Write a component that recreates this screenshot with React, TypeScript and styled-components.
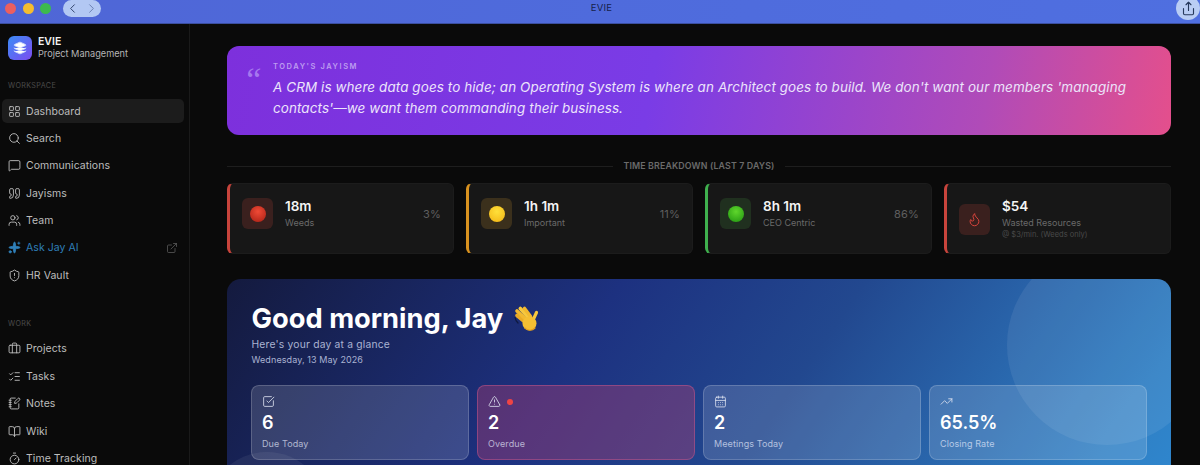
import React from 'react';
import styled, { createGlobalStyle } from 'styled-components';
import {
  LayoutGrid, Search, MessageSquare, Quote, Users, Sparkles, ExternalLink, ShieldAlert,
  Briefcase, ListChecks, NotebookPen, BookOpen, Timer, Flame, SquareCheckBig, TriangleAlert,
  CalendarDays, TrendingUp, ChevronLeft, ChevronRight, Share, Layers,
} from 'lucide-react';

const Global = createGlobalStyle`
  html, body { margin: 0; padding: 0; height: 465px; overflow: hidden; background: #0a0a0a; }
  body { font-family: Inter, "Noto Sans", "Liberation Sans", sans-serif; -webkit-font-smoothing: antialiased; }
  * { box-sizing: border-box; }
`;

const Window = styled.div`
  width: 1200px; height: 465px; display: flex; flex-direction: column; overflow: hidden; background: #0a0a0a;
`;
const TitleBar = styled.header`
  height: 24px; flex: none; display: grid; grid-template-columns: 1fr auto 1fr; align-items: start;
  background: linear-gradient(90deg, #4f66d6 0%, #4f6bdc 50%, #4f6fe0 100%);
  border-bottom: 1px solid #3b4f9f; overflow: hidden;
`;
const TitleLeft = styled.div`display: flex; align-items: flex-start; padding-left: 5px;`;
const Light = styled.span<{ $c: string; $mr?: number }>`
  width: 11px; height: 11px; border-radius: 50%; background: ${p => p.$c}; margin-right: ${p => p.$mr ?? 6.5}px; margin-top: 2.5px; flex: none;
`;
const NavPill = styled.div`
  width: 38px; height: 17px; border-radius: 9px; background: #b3c8f3; display: flex; align-items: center;
  justify-content: space-between; padding: 0 2px; margin-left: 12px; color: #33476f;
`;
const TitleText = styled.div`font-size: 9.5px; line-height: 16px; color: #16214a; letter-spacing: 0.2px; padding-left: 3px;`;
const TitleRight = styled.div`display: flex; justify-content: flex-end;`;
const ShareBtn = styled.div`
  width: 24px; height: 24px; border-radius: 50%; margin-top: -4px; background: #b9cdf4; color: #26395c;
  display: flex; align-items: center; justify-content: center;
`;
const Body = styled.div`flex: 1; display: flex; min-height: 0;`;
const Sidebar = styled.aside`
  width: 190px; flex: none; border-right: 1px solid #1a1a1a; padding: 12px 5px 0 2px; display: flex; flex-direction: column; background: #0a0a0a;
`;
const Brand = styled.div`display: flex; align-items: center; gap: 6px; padding-left: 6px; height: 24px;`;
const Logo = styled.div`
  width: 24px; height: 24px; border-radius: 6px; background: linear-gradient(135deg, #3b8cf6, #7c4cf0);
  display: flex; align-items: center; justify-content: center; color: #fff;
`;
const BrandText = styled.div`display: flex; flex-direction: column;`;
const BrandName = styled.div`font-size: 10.5px; line-height: 12px; font-weight: 600; color: #f2f2f2;`;
const BrandSub = styled.div`font-size: 9.2px; line-height: 12px; color: #b5b5b5;`;
const SectionLabel = styled.div<{ $top: number }>`
  font-size: 7.2px; line-height: 10px; letter-spacing: 0.35px; color: #4a4a4a; padding-left: 6px; margin-top: ${p => p.$top}px; margin-bottom: 8px;
`;
const NavList = styled.nav`display: flex; flex-direction: column; gap: 3.4px;`;
const NavItem = styled.div<{ $active?: boolean; $accent?: boolean }>`
  height: 24px; flex: none; display: flex; align-items: center; gap: 5.5px; padding: 0 5.5px; border-radius: 5px;
  font-size: 10.5px; letter-spacing: 0.05px; color: ${p => (p.$accent ? '#2f7fb8' : '#bdbdbd')};
  background: ${p => (p.$active ? '#1c1c1c' : 'transparent')};
  svg { flex: none; }
`;
const NavEnd = styled.span`margin-left: auto; margin-right: 1px; display: flex; color: #5f5f5f;`;
const Main = styled.main`flex: 1; min-width: 0; padding: 22px 29px 0 37px; display: flex; flex-direction: column; overflow: hidden;`;
const QuoteCard = styled.section`
  height: 89px; flex: none; border-radius: 12px; padding: 16px 20px 0 19px; display: flex; gap: 16px; position: relative; overflow: hidden;
  background: linear-gradient(100deg, #7d30dc 0%, #7a3ce6 45%, #b04bb8 80%, #e44f8c 100%);
`;
const QuoteMark = styled.div`
  font-family: "Liberation Serif", serif; font-size: 34px; line-height: 36px; color: #a678ee; font-style: italic; width: 11px; flex: none; transform: translateX(-3px);
`;
const QuoteBody = styled.div`display: flex; flex-direction: column;`;
const QuoteLabel = styled.div`font-size: 7.5px; line-height: 10px; font-weight: 600; letter-spacing: 1.55px; color: #bd9cf0; margin-bottom: 5px;`;
const QuoteText = styled.div`font-size: 13.45px; line-height: 21.3px; font-style: italic; color: #ece4fb; letter-spacing: 0.1px;`;
const Divider = styled.div`height: 10px; margin: 26px 0 12px; display: flex; align-items: center; gap: 10px;`;
const DivLine = styled.div`flex: 1; height: 1px; background: #1e1e1e;`;
const DivText = styled.div`font-size: 8.8px; line-height: 10px; font-weight: 600; color: #6b6b6b; letter-spacing: 0.15px;`;
const StatGrid = styled.div`display: grid; grid-template-columns: repeat(4, 1fr); gap: 12px; flex: none;`;
const TimeCard = styled.div<{ $c: string }>`
  height: 71px; border-radius: 6px; background: #171717; border: 1px solid #1c1c1c; border-left: 3px solid ${p => p.$c};
  padding: 14px 12px 0 12px;
`;
const TimeRow = styled.div`display: flex; align-items: center; gap: 12px;`;
const IconTile = styled.div<{ $bg: string }>`
  width: 31px; height: 31px; border-radius: 6px; background: ${p => p.$bg}; flex: none; display: flex; align-items: center; justify-content: center; color: #d8443c;
`;
const Ball = styled.span<{ $l: string; $d: string }>`
  width: 16px; height: 16px; border-radius: 50%; background: radial-gradient(circle at 50% 35%, ${p => p.$l}, ${p => p.$d});
`;
const TimeText = styled.div`display: flex; flex-direction: column; flex: 1; min-width: 0;`;
const TimeValue = styled.div`font-size: 13.5px; line-height: 17px; font-weight: 600; color: #f4f4f4;`;
const TimeLabel = styled.div`font-size: 9px; line-height: 13px; color: #6a6a6a; margin-top: 1px;`;
const TimeNote = styled.div`font-size: 7.5px; line-height: 11px; color: #4a4a4a;`;
const Pct = styled.div`font-size: 11px; color: #5f5f5f; letter-spacing: 0.2px;`;
const Hero = styled.section`
  margin-top: 25px; height: 230px; flex: none; border-radius: 14px; padding: 23px 24px 0; position: relative; overflow: hidden;
  background: linear-gradient(125deg, #141a3e 0%, #1d3180 36%, #22488f 58%, #2f7fc4 90%, #2f88d0 100%);
`;
const BlobTop = styled.div`
  position: absolute; width: 200px; height: 200px; border-radius: 50%; top: -34px; right: -36px; background: rgba(255,255,255,0.075);
`;
const BlobBottom = styled.div`
  position: absolute; width: 120px; height: 120px; border-radius: 50%; left: -20px; top: 173px; background: rgba(255,255,255,0.06);
`;
const HeroContent = styled.div`position: relative;`;
const Greeting = styled.h1`
  margin: 0; font-size: 27.3px; line-height: 33px; font-weight: 700; color: #fff; display: flex; align-items: center; gap: 9px; padding-left: 0.5px;
`;
const HeroSub = styled.div`font-size: 10.3px; line-height: 14px; color: #aab3d2; margin-top: 2px; letter-spacing: 0.2px; padding-left: 0.5px;`;
const HeroDate = styled.div`font-size: 9px; line-height: 12px; color: #aab3d2; margin-top: 3px; letter-spacing: 0.1px; padding-left: 0.5px;`;
const HeroGrid = styled.div`display: grid; grid-template-columns: repeat(4, 1fr); gap: 8px; margin-top: 19px;`;
const HeroCard = styled.div<{ $danger?: boolean }>`
  height: 75px; border-radius: 8px; padding: 9px 10px 0; display: flex; flex-direction: column;
  background: ${p => (p.$danger ? 'rgba(190,60,110,0.36)' : 'rgba(255,255,255,0.14)')};
  border: 1px solid ${p => (p.$danger ? 'rgba(210,90,140,0.45)' : 'rgba(255,255,255,0.18)')};
`;
const HeroIconRow = styled.div`height: 13px; display: flex; align-items: center; gap: 6px; color: #dfe4f2;`;
const Dot = styled.span`width: 6px; height: 6px; border-radius: 50%; background: #ef4444;`;
const HeroValue = styled.div`font-size: 18px; line-height: 22px; font-weight: 600; color: #fff; margin-top: 4px;`;
const HeroLabel = styled.div`font-size: 9px; line-height: 12px; color: rgba(235,240,255,0.68); margin-top: 4px; letter-spacing: 0.1px;`;
const Wave = styled.svg`flex: none;`;

const workspace = [
  { icon: LayoutGrid, label: 'Dashboard', active: true },
  { icon: Search, label: 'Search' },
  { icon: MessageSquare, label: 'Communications' },
  { icon: Quote, label: 'Jayisms' },
  { icon: Users, label: 'Team' },
  { icon: Sparkles, label: 'Ask Jay AI', accent: true, end: true },
  { icon: ShieldAlert, label: 'HR Vault' },
];
const work = [
  { icon: Briefcase, label: 'Projects' },
  { icon: ListChecks, label: 'Tasks' },
  { icon: NotebookPen, label: 'Notes' },
  { icon: BookOpen, label: 'Wiki' },
  { icon: Timer, label: 'Time Tracking' },
];

type Item = { icon: React.ElementType; label: string; active?: boolean; accent?: boolean; end?: boolean };
const Nav = ({ items }: { items: Item[] }) => (
  <NavList>
    {items.map(({ icon: Icon, label, active, accent, end }) => (
      <NavItem key={label} $active={active} $accent={accent}>
        <Icon size={13} strokeWidth={1.7} fill={accent ? 'currentColor' : 'none'} />
        <span>{label}</span>
        {end && <NavEnd><ExternalLink size={12} strokeWidth={1.5} /></NavEnd>}
      </NavItem>
    ))}
  </NavList>
);

const times = [
  { c: '#c8443c', bg: '#3a201e', l: '#ef4a36', d: '#a81f14', value: '18m', label: 'Weeds', pct: '3%' },
  { c: '#d9921f', bg: '#3b301c', l: '#ffe03a', d: '#f2b413', value: '1h 1m', label: 'Important', pct: '11%' },
  { c: '#3fb04e', bg: '#20301f', l: '#5fd62c', d: '#1f9410', value: '8h 1m', label: 'CEO Centric', pct: '86%' },
];
const heroStats = [
  { icon: SquareCheckBig, value: '6', label: 'Due Today' },
  { icon: TriangleAlert, value: '2', label: 'Overdue', danger: true },
  { icon: CalendarDays, value: '2', label: 'Meetings Today' },
  { icon: TrendingUp, value: '65.5%', label: 'Closing Rate' },
];

const WaveHand = () => (
  <Wave width="29" height="29" viewBox="0 0 29 29">
    <g fill="none" stroke="#f2b92f" strokeWidth="3.6" strokeLinecap="round">
      <path d="M5 11.500 L13 18" stroke="#e9aa26" />
      <path d="M5 7 L14 15.500" />
      <path d="M8.300 4.500 L16 13" stroke="#f7c83e" />
      <path d="M12.500 4.500 L18.500 12.500" stroke="#f2b92f" />
      <path d="M24.500 8.500 L21.500 15" stroke="#f7c83e" strokeWidth="3.2" />
    </g>
    <circle cx="17.500" cy="19.500" r="7" fill="#f5bf33" />
    <path d="M13 24 C15 26.500 20 27.500 23 24" fill="none" stroke="#e09a1e" strokeWidth="1.2" strokeLinecap="round" />
    <path d="M3 13.500 C3.300 15.500 4.500 17.500 6 19" fill="none" stroke="#0f1a40" strokeWidth="1.2" strokeLinecap="round" />
  </Wave>
);

export default function App() {
  return (
    <Window>
      <Global />
      <TitleBar>
        <TitleLeft>
          <Light $c="#ec5f5f" />
          <Light $c="#f5bd2e" />
          <Light $c="#3dba4e" $mr={0} />
          <NavPill>
            <ChevronLeft size={15} strokeWidth={1.6} />
            <ChevronRight size={15} strokeWidth={1.6} color="#6c82b4" />
          </NavPill>
        </TitleLeft>
        <TitleText>EVIE</TitleText>
        <TitleRight>
          <ShareBtn><Share size={15} strokeWidth={1.8} /></ShareBtn>
        </TitleRight>
      </TitleBar>
      <Body>
        <Sidebar>
          <Brand>
            <Logo><Layers size={14} strokeWidth={1.6} fill="#fff" stroke="#c9d6fb" /></Logo>
            <BrandText>
              <BrandName>EVIE</BrandName>
              <BrandSub>Project Management</BrandSub>
            </BrandText>
          </Brand>
          <SectionLabel $top={21}>WORKSPACE</SectionLabel>
          <Nav items={workspace} />
          <SectionLabel $top={31.5}>WORK</SectionLabel>
          <Nav items={work} />
        </Sidebar>
        <Main>
          <QuoteCard>
            <QuoteMark>“</QuoteMark>
            <QuoteBody>
              <QuoteLabel>TODAY'S JAYISM</QuoteLabel>
              <QuoteText>
                A CRM is where data goes to hide; an Operating System is where an Architect goes to build. We don't want our members 'managing contacts'—we want them commanding their business.
              </QuoteText>
            </QuoteBody>
          </QuoteCard>
          <Divider>
            <DivLine />
            <DivText>TIME BREAKDOWN (LAST 7 DAYS)</DivText>
            <DivLine />
          </Divider>
          <StatGrid>
            {times.map(t => (
              <TimeCard key={t.label} $c={t.c}>
                <TimeRow>
                  <IconTile $bg={t.bg}><Ball $l={t.l} $d={t.d} /></IconTile>
                  <TimeText>
                    <TimeValue>{t.value}</TimeValue>
                    <TimeLabel>{t.label}</TimeLabel>
                  </TimeText>
                  <Pct>{t.pct}</Pct>
                </TimeRow>
              </TimeCard>
            ))}
            <TimeCard $c="#c8443c">
              <TimeRow>
                <IconTile $bg="#3a201e"><Flame size={15} strokeWidth={1.6} /></IconTile>
                <TimeText>
                  <TimeValue>$54</TimeValue>
                  <TimeLabel>Wasted Resources</TimeLabel>
                  <TimeNote>@ $3/min. (Weeds only)</TimeNote>
                </TimeText>
              </TimeRow>
            </TimeCard>
          </StatGrid>
          <Hero>
            <BlobTop />
            <BlobBottom />
            <HeroContent>
              <Greeting>Good morning, Jay <WaveHand /></Greeting>
              <HeroSub>Here's your day at a glance</HeroSub>
              <HeroDate>Wednesday, 13 May 2026</HeroDate>
              <HeroGrid>
                {heroStats.map(({ icon: Icon, value, label, danger }) => (
                  <HeroCard key={label} $danger={danger}>
                    <HeroIconRow>
                      <Icon size={13} strokeWidth={1.5} />
                      {danger && <Dot />}
                    </HeroIconRow>
                    <HeroValue>{value}</HeroValue>
                    <HeroLabel>{label}</HeroLabel>
                  </HeroCard>
                ))}
              </HeroGrid>
            </HeroContent>
          </Hero>
        </Main>
      </Body>
    </Window>
  );
}
